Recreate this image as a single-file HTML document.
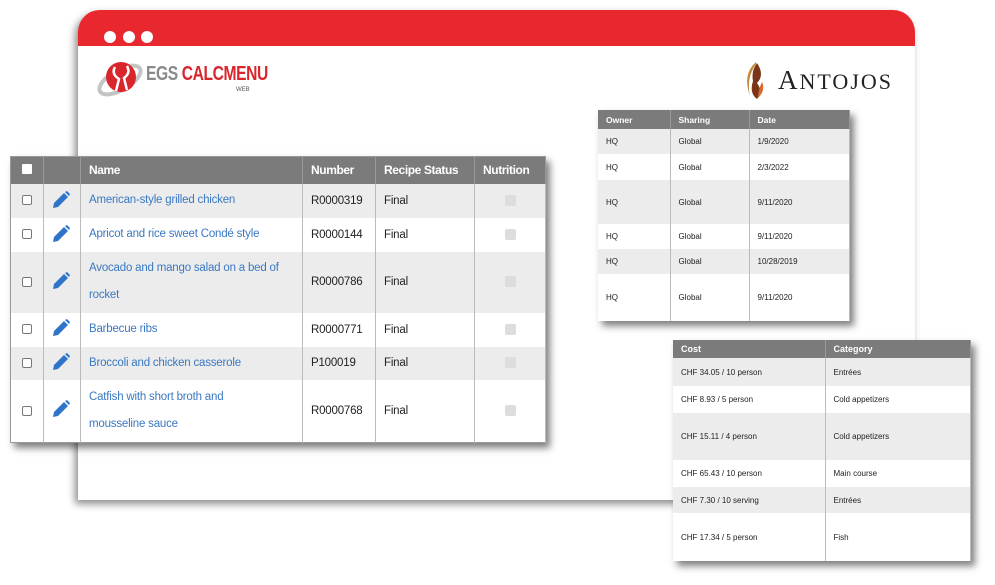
<!DOCTYPE html>
<html><head><meta charset="utf-8">
<style>
*{margin:0;padding:0;box-sizing:border-box}
body{width:995px;height:585px;background:#fff;position:relative;overflow:hidden;font-family:"Liberation Sans",sans-serif}
.win{position:absolute;left:78px;top:10px;width:837px;height:490px;background:#fff;border-radius:22px 22px 0 0;box-shadow:-3px 4px 8px rgba(0,0,0,.45);overflow:hidden}
.bar{height:36px;background:#e8272f}
.dot{position:absolute;top:21px;width:12px;height:12px;border-radius:50%;background:#fff}
table{border-collapse:collapse;position:absolute;background:#fff;box-shadow:4px 5px 7px rgba(0,0,0,.5);table-layout:fixed}
th{background:#7b7b7b;color:#fff;text-align:left;font-weight:bold;border-right:1px solid #999;padding:0 8px;white-space:nowrap;overflow:hidden}
td{border-right:1px solid #bbb;padding:0 8px;color:#222}
tr.g td{background:#ececec}
.t1{left:10px;top:156px;width:535px;font-size:11.5px;border:1px solid #999;letter-spacing:-0.2px}
.t1 th{height:27px;font-size:12px;letter-spacing:-0.4px}
.t1 a{color:#3a78c2;text-decoration:none;line-height:27px}
.cb{width:10px;height:10px;border:1px solid #777;border-radius:2px;display:inline-block;background:#fff;vertical-align:middle}
.ck{width:11px;height:11px;background:#ddd;border-radius:2px;display:inline-block;vertical-align:middle}
.t2{left:598px;top:110px;width:252px;font-size:8px}
.t2 th{height:19px;font-size:8.5px}
.t3{left:673px;top:340px;width:298px;font-size:8px}
.t3 th{height:18px;font-size:9px}
</style></head><body>
<div class="win"><div class="bar"></div>
<div class="dot" style="left:26px"></div><div class="dot" style="left:45px"></div><div class="dot" style="left:63px"></div>
<svg style="position:absolute;left:18px;top:48px" width="50" height="42" viewBox="0 0 50 42">
<ellipse cx="24" cy="22" rx="23" ry="10" fill="none" stroke="#c4c4c4" stroke-width="4" transform="rotate(-30 24 22)"/>
<circle cx="25" cy="19" r="15" fill="#d9262c"/>
<path d="M19 9q-4 7 4 12l-3 12M31 8q4 7-3 12l3 12" stroke="#fff" stroke-width="2.5" fill="none"/>
</svg>
<div style="position:absolute;left:68px;top:53px;font-weight:bold;font-size:20px;letter-spacing:-0.5px;transform:scaleX(.78);transform-origin:left;white-space:nowrap"><span style="color:#8a8a8a">EGS </span><span style="color:#d9262c">CALCMENU</span></div>
<div style="position:absolute;left:158px;top:77px;font-size:6px;color:#555">WEB</div>
<svg style="position:absolute;left:664px;top:50px" width="26" height="40" viewBox="0 0 26 40">
<path d="M14 2q-14 12-6 34q-4-18 6-32z" fill="#c08a3a"/><path d="M15 3q8 12 0 20q6 8 0 16q-8-6-4-18q-2-10 4-18z" fill="#7a3418"/><path d="M20 22q4 8-4 16q0-8 4-16z" fill="#d86a30"/>
</svg>
<div style="position:absolute;left:700px;top:55px;font-family:'Liberation Serif',serif;font-size:27px;letter-spacing:2px;color:#222">A<span style="font-size:22px">NTOJOS</span></div>
</div>

<table class="t1">
<colgroup><col style="width:33px"><col style="width:37px"><col style="width:222px"><col style="width:73px"><col style="width:99px"><col style="width:71px"></colgroup>
<tr><th style="text-align:center;padding:0"><span style="display:inline-block;width:10px;height:10px;background:#fff;border-radius:1px"></span></th><th></th><th>Name</th><th>Number</th><th>Recipe Status</th><th>Nutrition</th></tr>
<tr class="g" style="height:34px"><td align=center><span class="cb"></span></td><td></td><td><a>American-style grilled chicken</a></td><td>R0000319</td><td>Final</td><td align=center><span class="ck"></span></td></tr>
<tr style="height:34px"><td align=center><span class="cb"></span></td><td></td><td><a>Apricot and rice sweet Condé style</a></td><td>R0000144</td><td>Final</td><td align=center><span class="ck"></span></td></tr>
<tr class="g" style="height:61px"><td align=center><span class="cb"></span></td><td></td><td><a>Avocado and mango salad on a bed of<br>rocket</a></td><td>R0000786</td><td>Final</td><td align=center><span class="ck"></span></td></tr>
<tr style="height:34px"><td align=center><span class="cb"></span></td><td></td><td><a>Barbecue ribs</a></td><td>R0000771</td><td>Final</td><td align=center><span class="ck"></span></td></tr>
<tr class="g" style="height:33px"><td align=center><span class="cb"></span></td><td></td><td><a>Broccoli and chicken casserole</a></td><td>P100019</td><td>Final</td><td align=center><span class="ck"></span></td></tr>
<tr style="height:63px"><td align=center><span class="cb"></span></td><td></td><td><a>Catfish with short broth and<br>mousseline sauce</a></td><td>R0000768</td><td>Final</td><td align=center><span class="ck"></span></td></tr>
</table>
<svg width="0" height="0" style="position:absolute"><defs><symbol id="p" viewBox="0 0 20 20"><path d="M2 18l1-5L13 3l4 4L7 17z M14 2l2-1 3 3-1 2z" fill="#2f74c8"/></symbol></defs></svg>
<div style="position:absolute;left:51px;top:190px"><svg width="20" height="20"><use href="#p"/></svg></div>
<div style="position:absolute;left:51px;top:224px"><svg width="20" height="20"><use href="#p"/></svg></div>
<div style="position:absolute;left:51px;top:271px"><svg width="20" height="20"><use href="#p"/></svg></div>
<div style="position:absolute;left:51px;top:318px"><svg width="20" height="20"><use href="#p"/></svg></div>
<div style="position:absolute;left:51px;top:352px"><svg width="20" height="20"><use href="#p"/></svg></div>
<div style="position:absolute;left:51px;top:399px"><svg width="20" height="20"><use href="#p"/></svg></div>

<table class="t2">
<colgroup><col style="width:72px"><col style="width:79px"><col></colgroup>
<tr><th>Owner</th><th>Sharing</th><th>Date</th></tr>
<tr class="g" style="height:25px"><td>HQ</td><td>Global</td><td>1/9/2020</td></tr>
<tr style="height:26px"><td>HQ</td><td>Global</td><td>2/3/2022</td></tr>
<tr class="g" style="height:44px"><td>HQ</td><td>Global</td><td>9/11/2020</td></tr>
<tr style="height:25px"><td>HQ</td><td>Global</td><td>9/11/2020</td></tr>
<tr class="g" style="height:25px"><td>HQ</td><td>Global</td><td>10/28/2019</td></tr>
<tr style="height:47px"><td>HQ</td><td>Global</td><td>9/11/2020</td></tr>
</table>

<table class="t3">
<colgroup><col style="width:152px"><col></colgroup>
<tr><th>Cost</th><th>Category</th></tr>
<tr class="g" style="height:28px"><td>CHF 34.05 / 10 person</td><td>Entrées</td></tr>
<tr style="height:27px"><td>CHF 8.93 / 5 person</td><td>Cold appetizers</td></tr>
<tr class="g" style="height:47px"><td>CHF 15.11 / 4 person</td><td>Cold appetizers</td></tr>
<tr style="height:27px"><td>CHF 65.43 / 10 person</td><td>Main course</td></tr>
<tr class="g" style="height:26px"><td>CHF 7.30 / 10 serving</td><td>Entrées</td></tr>
<tr style="height:48px"><td>CHF 17.34 / 5 person</td><td>Fish</td></tr>
</table>
</body></html>
